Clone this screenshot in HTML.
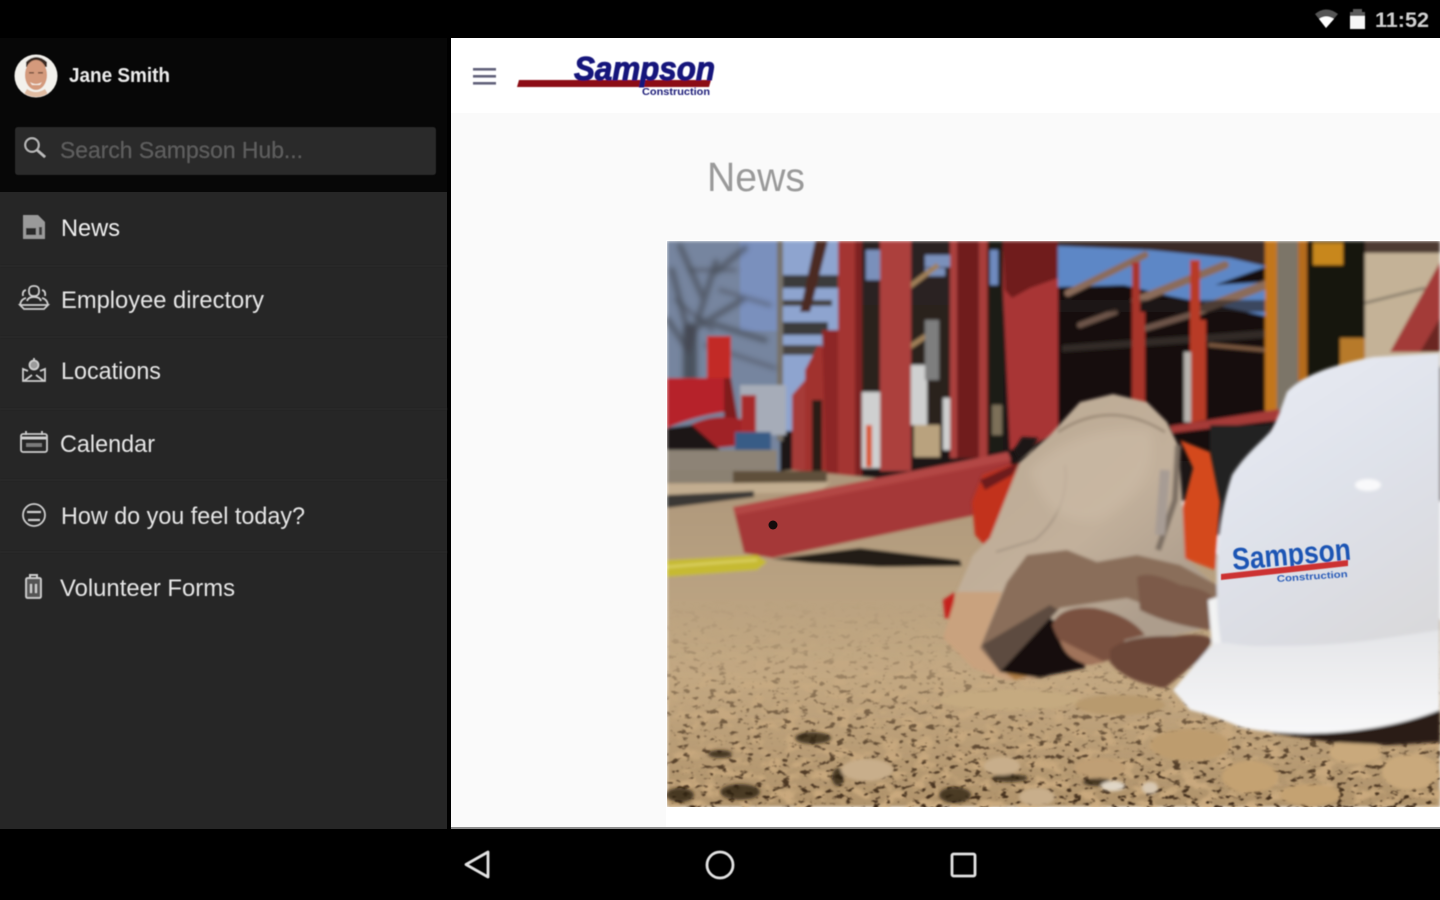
<!DOCTYPE html>
<html lang="en">
<head>
<meta charset="utf-8">
<title>Sampson Hub - News</title>
<style>
html,body{margin:0;padding:0;width:1440px;height:900px;overflow:hidden;background:#000}
svg{display:block;position:absolute;left:0;top:0}
text{font-family:"Liberation Sans",sans-serif}
</style>
</head>
<body>
<svg width="1440" height="900" viewBox="0 0 1440 900" xmlns="http://www.w3.org/2000/svg">
<defs>
  <clipPath id="ph"><rect x="667" y="241" width="773" height="566"/></clipPath>
  <clipPath id="av"><circle cx="36" cy="76" r="21"/></clipPath>
  <filter id="b1" x="-5%" y="-5%" width="110%" height="110%"><feGaussianBlur stdDeviation="1.5"/></filter>
  <filter id="b2" x="-10%" y="-10%" width="120%" height="120%"><feGaussianBlur stdDeviation="2.4"/></filter>
  <filter id="b3" x="-30%" y="-30%" width="160%" height="160%"><feGaussianBlur stdDeviation="5"/></filter>
  <filter id="t" x="-5%" y="-20%" width="110%" height="140%"><feGaussianBlur stdDeviation="0.6"/></filter>
  <filter id="dk" x="0" y="0" width="100%" height="100%" color-interpolation-filters="sRGB">
    <feTurbulence type="fractalNoise" baseFrequency="0.11 0.2" numOctaves="4" seed="4"/>
    <feColorMatrix values="0 0 0 0 .24  0 0 0 0 .16  0 0 0 0 .09  8 0 0 0 -4.7"/>
    <feGaussianBlur stdDeviation="0.8"/>
  </filter>
  <filter id="lt" x="0" y="0" width="100%" height="100%" color-interpolation-filters="sRGB">
    <feTurbulence type="fractalNoise" baseFrequency="0.06 0.1" numOctaves="3" seed="11"/>
    <feColorMatrix values="0 0 0 0 .83  0 0 0 0 .70  0 0 0 0 .52  6 0 0 0 -3"/>
    <feGaussianBlur stdDeviation="1.2"/>
  </filter>
  <linearGradient id="gMask" x1="0" y1="600" x2="0" y2="807" gradientUnits="userSpaceOnUse">
    <stop offset="0" stop-color="#000"/><stop offset=".3" stop-color="#333"/><stop offset=".6" stop-color="#999"/><stop offset="1" stop-color="#fff"/>
  </linearGradient>
  <mask id="gm" maskUnits="userSpaceOnUse" x="667" y="560" width="773" height="250"><rect x="667" y="560" width="773" height="250" fill="url(#gMask)"/></mask>
  <linearGradient id="ground" x1="0" y1="480" x2="0" y2="807" gradientUnits="userSpaceOnUse">
    <stop offset="0" stop-color="#ae977b"/><stop offset=".3" stop-color="#b8a181"/><stop offset=".6" stop-color="#c3a882"/><stop offset="1" stop-color="#b0936b"/>
  </linearGradient>
  <linearGradient id="dome" x1="1220" y1="360" x2="1400" y2="640" gradientUnits="userSpaceOnUse">
    <stop offset="0" stop-color="#e8ebf4"/><stop offset=".5" stop-color="#dfe2ea"/><stop offset="1" stop-color="#d9d9dc"/>
  </linearGradient>
  <linearGradient id="brim" x1="0" y1="630" x2="0" y2="733" gradientUnits="userSpaceOnUse">
    <stop offset="0" stop-color="#e4e5e8"/><stop offset="1" stop-color="#f8f8f9"/>
  </linearGradient>
  <linearGradient id="glove" x1="1000" y1="400" x2="1170" y2="600" gradientUnits="userSpaceOnUse">
    <stop offset="0" stop-color="#bcaa94"/><stop offset=".6" stop-color="#c2b09b"/><stop offset="1" stop-color="#ad9d8c"/>
  </linearGradient>
</defs>

<!-- base surfaces -->
<rect width="1440" height="900" fill="#000"/>
<rect x="0" y="38" width="447" height="154" fill="#070707"/>
<rect x="0" y="192" width="447" height="637" fill="#262626"/>
<rect x="451" y="38" width="989" height="791" fill="#fff"/>
<rect x="451" y="113" width="989" height="715" fill="#fafafa"/>
<rect x="666" y="240" width="774" height="588" fill="#fff"/>
<rect x="451" y="827" width="989" height="2" fill="#8d8d8d"/>

<!-- photo -->
<g clip-path="url(#ph)">
  <g filter="url(#b1)">
    <!-- background -->
    <rect x="667" y="241" width="773" height="260" fill="#1a1512"/>
    <rect x="667" y="241" width="113" height="240" fill="#76859f"/>
    <rect x="740" y="241" width="40" height="90" fill="#7a90bd"/>
    <rect x="780" y="241" width="60" height="190" fill="#8ea4cf"/>
    <rect x="782" y="275" width="58" height="13" fill="#3b3a3a"/>
    <rect x="782" y="300" width="50" height="6" fill="#443f3e"/>
    <rect x="782" y="322" width="46" height="13" fill="#3b3a3a"/>
    <rect x="782" y="345" width="40" height="10" fill="#4a4442"/>
    <rect x="777" y="241" width="6" height="200" fill="#77726a"/>
    <rect x="740" y="385" width="46" height="50" fill="#a6acb8"/>
    <!-- tree -->
    <g fill="none" stroke="#3f434c" stroke-linecap="round" filter="url(#b2)">
      <path d="M690 385V330" stroke-width="14" opacity=".8"/>
      <path d="M690 340L672 270M690 345L716 262M692 330L742 300M688 350L668 320M700 320L765 340M704 300L680 246M712 275L745 248" stroke-width="6" opacity=".6"/>
      <path d="M676 300L712 330M720 290L770 305M690 270L735 270M705 345L775 368" stroke-width="4" opacity=".5"/>
    </g>
    <rect x="667" y="380" width="40" height="12" fill="#4c4a48"/>
    <!-- left red barrier -->
    <rect x="707" y="336" width="24" height="50" fill="#c22a28"/>
    <path d="M667 378H724V412Q695 416 667 428Z" fill="#b6232a"/>
    <path d="M724 378H731L738 420L724 430Z" fill="#7f1c1c"/>
    <path d="M690 425Q715 412 745 420V445L715 448Z" fill="#a02226"/>
    <rect x="741" y="395" width="15" height="50" fill="#a82c2b"/>
    <path d="M667 428L692 425L720 450H667Z" fill="#1c1513"/>
    <rect x="735" y="432" width="36" height="24" fill="#375c86"/>
    <rect x="667" y="450" width="110" height="22" fill="#8d8376"/>

    <!-- column backdrop -->
    <rect x="840" y="241" width="215" height="70" fill="#2c2320"/>
    <path d="M815 241L828 241L810 312H800Z" fill="#4b2a22"/>
    <path d="M866 250h14v30h-14zM925 255h25v12h-25zM925 268h20v8h-20z" fill="#7a90bb"/>
    <rect x="860" y="305" width="90" height="145" fill="#2a241f"/>
    <path d="M862 392h18v76h-18zM910 365h17v60h-17zM943 398h9v52h-9z" fill="#cfd0d0"/>
    <path d="M866 425h6v42h-6z" fill="#d8542a"/>
    <path d="M914 425h26v32h-26z" fill="#b9a27e"/>
    <path d="M905 290L938 265M905 350L938 328" stroke="#a08059" stroke-width="5"/>
    <rect x="925" y="320" width="14" height="60" fill="#7e7e7e"/>
    <rect x="988" y="241" width="15" height="210" fill="#1f1a17"/>
    <path d="M990 250h8v35h-8z" fill="#6f8bc0"/>
    <rect x="992" y="405" width="10" height="30" fill="#7d6f58"/>

    <!-- red columns -->
    <path d="M792 395L812 372V480H792Z" fill="#a63a38"/>
    <path d="M805 370L818 345L828 350V478H805Z" fill="#a1322f"/>
    <path d="M822 330H840V476H826Z" fill="#8d2826"/>
    <rect x="812" y="400" width="10" height="75" fill="#2a1c18"/>
    <rect x="838" y="241" width="24" height="236" fill="#a43633"/>
    <rect x="855" y="241" width="7" height="236" fill="#7d2422"/>
    <rect x="880" y="241" width="31" height="230" fill="#ac403e"/>
    <rect x="950" y="241" width="38" height="217" fill="#701c1d"/>
    <rect x="950" y="241" width="7" height="217" fill="#aa3f3c"/>
    <rect x="979" y="241" width="8" height="217" fill="#a83c3a"/>
    <path d="M1003 241H1058V435L1010 450L1003 290Z" fill="#a83434"/>
    <path d="M1003 241H1058V278L1030 288L1012 298L1005 290Z" fill="#6f1c1c"/>

    <!-- right structure -->
    <rect x="1058" y="241" width="207" height="220" fill="#15110f"/>
    <path d="M1058 245H1265V267L1215 285L1265 282V316L1215 305L1170 296L1124 285L1058 287Z" fill="#5d87c6"/>
    <path d="M1058 241H1265V266L1230 258L1150 250L1058 246Z" fill="#3a2c26"/>
    <g fill="none" stroke="#8b6c5a" stroke-linecap="round">
      <path d="M1068 293L1145 255" stroke-width="7"/>
      <path d="M1135 301L1225 265" stroke-width="8"/>
      <path d="M1200 310L1265 285" stroke-width="9"/>
      <path d="M1080 325L1115 312" stroke-width="6" stroke="#6d5448"/>
      <path d="M1140 330L1190 315" stroke-width="6" stroke="#6d5448"/>
      <path d="M1210 345L1265 350" stroke-width="4" stroke="#7a5840"/>
    </g>
    <path d="M1058 300H1265V312H1058Z" fill="#241d1a" opacity=".6"/>
    <path d="M1062 345L1265 330V338L1062 352Z" fill="#3c3633" opacity=".7"/>
    <path d="M1132 262h8v50h5v100h-13z" fill="#a9352a"/>
    <path d="M1190 260h10v60h6v100l-16 3z" fill="#b83a28"/>
    <rect x="1184" y="352" width="7" height="70" fill="#b7b4ae"/>
    <rect x="1265" y="241" width="42" height="170" fill="#7c7568"/>
    <rect x="1265" y="241" width="12" height="170" fill="#c2761e"/>
    <rect x="1298" y="241" width="9" height="140" fill="#b56c1e"/>
    <rect x="1307" y="241" width="58" height="135" fill="#16120f"/>
    <rect x="1313" y="243" width="30" height="22" fill="#c8871c"/>
    <rect x="1340" y="338" width="25" height="34" fill="#b77a2a"/>
    <rect x="1365" y="241" width="75" height="125" fill="#c4b297"/>
    <rect x="1365" y="241" width="75" height="12" fill="#4d3a30"/>
    <path d="M1365 303L1425 288" stroke="#8c806d" stroke-width="3"/>
    <path d="M1390 352L1440 262V352Z" fill="#a33a38"/>
    <path d="M1420 352L1440 318V352Z" fill="#6a2524"/>
    <path d="M1170 426L1280 409V420L1172 433Z" fill="#a63a38"/>
    <rect x="1210" y="425" width="60" height="110" fill="#242122"/>

    <!-- ground -->
    <path d="M667 482L792 470L1000 490L1440 620V807H667Z" fill="url(#ground)"/>
    <rect x="667" y="470" width="70" height="13" fill="#8b8172"/>
    <rect x="733" y="471" width="94" height="14" fill="#5f503a"/>
    <path d="M667 484L830 482L820 492L667 495Z" fill="#c2ad90"/>
    <path d="M667 495L754 491V497L667 508Z" fill="#3a3734"/>

    <!-- beam -->
    <path d="M733 507L1008 452L1015 480L1000 510L772 558L744 553Z" fill="#a53838"/>
    <path d="M733 507L1008 452L1011 460L736 515Z" fill="#b34744"/>
    <path d="M772 559L860 548L960 560L962 566L880 567L810 563Z" fill="#241a13"/>
    <!-- yellow strap -->
    <path d="M667 560L757 555L767 562L757 570L667 577Z" fill="#c6ba32"/>
    <path d="M667 567Q710 563 757 560" stroke="#e0d66a" stroke-width="2" fill="none"/>
  </g>
  <circle cx="773" cy="525" r="4.5" fill="#150c0c"/>

  <!-- gravel -->
  <g mask="url(#gm)">
    <rect x="667" y="560" width="773" height="250" filter="url(#lt)" opacity=".75"/>
    <rect x="667" y="560" width="773" height="250" filter="url(#dk)"/>
  </g>
  <g filter="url(#b1)">
    <g fill="#2e2015" opacity=".8">
      <ellipse cx="813" cy="738" rx="18" ry="6"/><ellipse cx="720" cy="754" rx="12" ry="4"/>
      <ellipse cx="740" cy="792" rx="20" ry="8"/><ellipse cx="838" cy="777" rx="6" ry="9"/>
      <ellipse cx="1010" cy="778" rx="18" ry="4"/><ellipse cx="1097" cy="782" rx="14" ry="4"/>
      <ellipse cx="680" cy="795" rx="14" ry="7"/><ellipse cx="955" cy="795" rx="16" ry="8"/>
    </g>
    <g fill="#c8ae8b">
      <ellipse cx="867" cy="770" rx="26" ry="11"/><ellipse cx="1002" cy="766" rx="18" ry="9"/>
      <ellipse cx="1037" cy="797" rx="18" ry="9"/><ellipse cx="1250" cy="777" rx="28" ry="16" fill="#c4a272"/>
      <ellipse cx="1310" cy="795" rx="30" ry="11" fill="#c4a272"/><ellipse cx="1355" cy="752" rx="26" ry="12" fill="#c9a97c"/>
      <ellipse cx="1410" cy="772" rx="28" ry="18" fill="#c9a97c"/><ellipse cx="1100" cy="768" rx="26" ry="10" fill="#bf9f74"/>
      <ellipse cx="1190" cy="745" rx="40" ry="16" fill="#bd9c6e"/>
    </g>
    <ellipse cx="1113" cy="786" rx="12" ry="5" fill="#e0d6c6"/>
    <ellipse cx="1150" cy="788" rx="8" ry="6" fill="#d8c8b2"/>
    <ellipse cx="1010" cy="700" rx="70" ry="10" fill="#c5aa80"/>
    <ellipse cx="1120" cy="705" rx="45" ry="10" fill="#b89a6e"/>

    <!-- orange cloth -->
    <path d="M972 502L983 475L1020 462L1007 495L987 548L975 535Z" fill="#c2301f"/>
    <path d="M980 480L1020 462L1012 475L985 490Z" fill="#6d1d1a"/>
    <path d="M1180 440L1210 452L1220 502L1215 570L1183 558L1180 518L1193 468Z" fill="#d4481f"/>
    <path d="M943 600L955 592L952 620L945 618Z" fill="#c4221f"/>
    <path d="M1014 450L1022 437L1038 438L1030 452L1018 458Z" fill="#1d1712"/>
    <!-- upper glove -->
    <path d="M1020 462L1050 435L1080 402L1113 394L1147 402L1167 422L1178 445L1182 495L1185 558L1215 585L1200 630L1000 672L945 640L957 592L973 555L990 538L1007 495Z" fill="url(#glove)"/>
    <path d="M1058 432Q1110 398 1165 432" stroke="#8e7d6b" stroke-width="2" fill="none"/>
    <path d="M1178 445L1175 500L1158 550" stroke="#7d7064" stroke-width="6" fill="none"/>
    <path d="M1165 470L1160 535" stroke="#a79c94" stroke-width="10" fill="none"/>
    <path d="M1065 465Q1070 510 1035 540L996 552" stroke="#9c8d7c" stroke-width="1.5" fill="none"/>
    <path d="M1030 470Q1075 425 1150 430Q1165 480 1100 520Q1050 530 1030 470Z" fill="#cbbaa5" opacity=".7" filter="url(#b3)"/>
    <!-- palm cuff -->
    <path d="M957 592L943 638L973 668L1007 680L1043 678L1036 640L1000 660L980 648L1002 592Z" fill="#c9a27e"/>
    <path d="M1004 672L1040 640L1044 672L1015 680Z" fill="#ad7c43"/>
    <!-- brown glove part -->
    <path d="M980 648L1007 582L1027 555L1067 550L1097 562L1137 555L1180 565L1217 585L1217 598L1210 628L1127 598L1060 608L1000 672Z" fill="#8a6e5a"/>
    <path d="M982 645L1050 605L1058 610L1000 672Z" fill="#5d4c40"/>
    <path d="M1000 672L1050 618L1085 640L1085 668L1050 675L1040 678Z" fill="#17110e"/>
    <!-- fingers -->
    <path d="M1137 577Q1150 570 1180 585Q1215 590 1217 605L1210 630Q1170 625 1140 610Z" fill="#7c5a48"/>
    <path d="M1052 625Q1060 605 1095 608Q1130 615 1145 635L1125 640L1110 660L1085 665Q1060 650 1052 625Z" fill="#7a5140"/>
    <path d="M1060 640L1080 650L1105 662L1090 665Q1065 660 1060 640Z" fill="#a0735a"/>
    <path d="M1110 650Q1125 635 1175 636Q1205 632 1212 640L1205 655L1175 680L1165 688Q1125 682 1110 662Z" fill="#6c4737"/>
    <!-- helmet shadow -->
    <path d="M1270 733L1440 690V742L1390 745L1330 742Z" fill="#2a1a12"/>
    <!-- helmet rim slice -->
    <path d="M1208 600L1217 597L1225 645L1212 647Z" fill="#f2f3f3"/>
    <!-- helmet dome -->
    <path d="M1217 597C1215 545 1222 505 1232 475C1245 455 1258 445 1270 432C1278 420 1282 405 1287 392C1300 378 1325 366 1373 357L1440 353V665H1225C1220 640 1217 620 1217 597Z" fill="url(#dome)"/>
    <ellipse cx="1368" cy="485" rx="13" ry="6" fill="#fff" opacity=".8"/>
    <!-- brim -->
    <path d="M1173 690L1213 643L1227 643Q1250 647 1273 646Q1330 646 1373 640L1440 630V710Q1410 722 1373 728Q1330 735 1290 733Q1260 732 1240 727Q1215 716 1190 710Z" fill="url(#brim)"/>
  </g>

  <!-- helmet logo -->
  <g filter="url(#t)">
    <text transform="translate(1233 570) rotate(-5)" font-size="31" font-weight="700" fill="#1f55b4" textLength="119" lengthAdjust="spacingAndGlyphs">Sampson</text>
    <path d="M1221 574L1348 560L1348 566L1221 580Z" fill="#cc3030"/>
    <text transform="translate(1277 582) rotate(-4)" font-size="9.5" font-weight="700" fill="#2a5cb8" textLength="71" lengthAdjust="spacingAndGlyphs">Construction</text>
  </g>
</g>

<g filter="url(#t)">
  <!-- status bar -->
  <path d="M1315 14Q1326 5 1338 14L1326 28Z" fill="#555"/>
  <path d="M1319 19Q1326 14 1334 19L1326 28Z" fill="#fff"/>
  <path d="M1353 9h9v3h3v5h-15v-5h3z" fill="#5a5a5a"/>
  <rect x="1350" y="16" width="15" height="13" fill="#f6f6f6"/>
  <text x="1375" y="27" font-size="21" font-weight="700" fill="#cfcfcf" textLength="54" lengthAdjust="spacingAndGlyphs">11:52</text>

  <!-- avatar -->
  <circle cx="36" cy="76" r="21.5" fill="#f3f1ec"/>
  <g clip-path="url(#av)">
    <path d="M26 62Q36 52 47 62V67H26Z" fill="#3a2a22"/>
    <ellipse cx="36" cy="75" rx="11" ry="15" fill="#d49a7c"/>
    <path d="M27 89Q36 95 45 89L50 98H22Z" fill="#e0bca2"/>
    <rect x="29" y="72" width="5" height="1.6" fill="#7b5743"/>
    <rect x="38" y="72" width="5" height="1.6" fill="#7b5743"/>
    <path d="M30 82Q36 86 42 82L40 85H32Z" fill="#f6efe8"/>
  </g>
  <text x="69" y="82" font-size="20" font-weight="700" fill="#ededed" textLength="101" lengthAdjust="spacingAndGlyphs">Jane Smith</text>

  <!-- search -->
  <rect x="15" y="127" width="421" height="48" rx="3" fill="#2b2b2b"/>
  <circle cx="32" cy="145" r="6.8" fill="none" stroke="#c0c0c0" stroke-width="1.6"/>
  <path d="M37 150L45 157" stroke="#c0c0c0" stroke-width="2.4"/>
  <text x="60" y="158" font-size="23" fill="#5e5e5e" textLength="243" lengthAdjust="spacingAndGlyphs">Search Sampson Hub...</text>

  <!-- menu dividers -->
  <g fill="#2a2a2a">
    <rect y="265" width="447" height="2"/><rect y="336" width="447" height="2"/><rect y="408" width="447" height="2"/><rect y="479" width="447" height="2"/><rect y="551" width="447" height="2"/>
  </g>

  <!-- menu text -->
  <g font-size="24" fill="#e6e6e6">
    <text x="61" y="236" fill="#f0f0f0" textLength="59" lengthAdjust="spacingAndGlyphs">News</text>
    <text x="61" y="308" textLength="203" lengthAdjust="spacingAndGlyphs">Employee directory</text>
    <text x="61" y="379" textLength="100" lengthAdjust="spacingAndGlyphs">Locations</text>
    <text x="60" y="452" textLength="95" lengthAdjust="spacingAndGlyphs">Calendar</text>
    <text x="61" y="524" textLength="244" lengthAdjust="spacingAndGlyphs">How do you feel today?</text>
    <text x="60" y="596" textLength="175" lengthAdjust="spacingAndGlyphs">Volunteer Forms</text>
  </g>

  <!-- menu icons -->
  <path d="M23 215H38L45 222V239H23Z" fill="#9a9a9a"/>
  <rect x="26" y="228" width="10" height="7" fill="#2a2a2a"/>
  <rect x="39" y="227" width="3" height="8" fill="#3a3a3a"/>

  <g fill="none" stroke="#cfcfcf" stroke-width="1.8">
    <rect x="29" y="286" width="10" height="10" rx="4"/>
    <path d="M23 296Q22 291 26 290M45 296Q46 291 42 290"/>
    <path d="M27 301Q28 297 34 297Q40 297 41 301"/>
    <path d="M20 305Q21 299 26 298M48 305Q47 299 42 298"/>
    <path d="M20 305H48L44 309H24Z"/>

    <circle cx="34" cy="365" r="4.5" fill="#9a9a9a"/>
    <path d="M34 358V361M28 371L23 369V381H45V369L40 371"/>
    <path d="M24 381L32 375M44 381L36 375"/>

    <rect x="21" y="434" width="26" height="18" rx="2"/>
    <path d="M21 438H47" stroke-width="3"/>
    <path d="M26 431v4M42 431v4"/>
    <rect x="26" y="443" width="16" height="4" fill="#7a7a7a" stroke="none"/>

    <circle cx="34" cy="515" r="11"/>
    <path d="M27 512H41M28 520H40" stroke-width="2.2"/>

    <rect x="26" y="578" width="15" height="20" rx="1.5" fill="#555"/>
    <path d="M30 578V575H37V578M31 584V593M36 584V593" stroke-width="2"/>
  </g>

  <!-- hamburger -->
  <g fill="#62627a">
    <rect x="473" y="68" width="23" height="2.6"/>
    <rect x="473" y="75" width="23" height="2.6"/>
    <rect x="473" y="82" width="23" height="2.6"/>
  </g>

  <!-- logo -->
  <path d="M519 80H711L709 87H517Z" fill="#8c0f16"/>
  <text x="574" y="80" font-size="33" font-weight="700" font-style="italic" fill="#13137c" stroke="#13137c" stroke-width="1" textLength="141" lengthAdjust="spacingAndGlyphs">Sampson</text>
  <text x="642" y="95" font-size="10" font-weight="700" fill="#1c1c78" textLength="68" lengthAdjust="spacingAndGlyphs">Construction</text>

  <!-- title -->
  <text x="707" y="191" font-size="41" fill="#9a9a9a" textLength="98" lengthAdjust="spacingAndGlyphs">News</text>

  <!-- nav bar -->
  <g fill="none" stroke="#e2e2e2" stroke-width="2.8" stroke-linejoin="round">
    <path d="M488 852V877L466 864.5Z"/>
    <circle cx="720" cy="865" r="13"/>
    <rect x="952" y="854" width="23" height="22" rx="1.5"/>
  </g>
</g>
</svg>
</body>
</html>
